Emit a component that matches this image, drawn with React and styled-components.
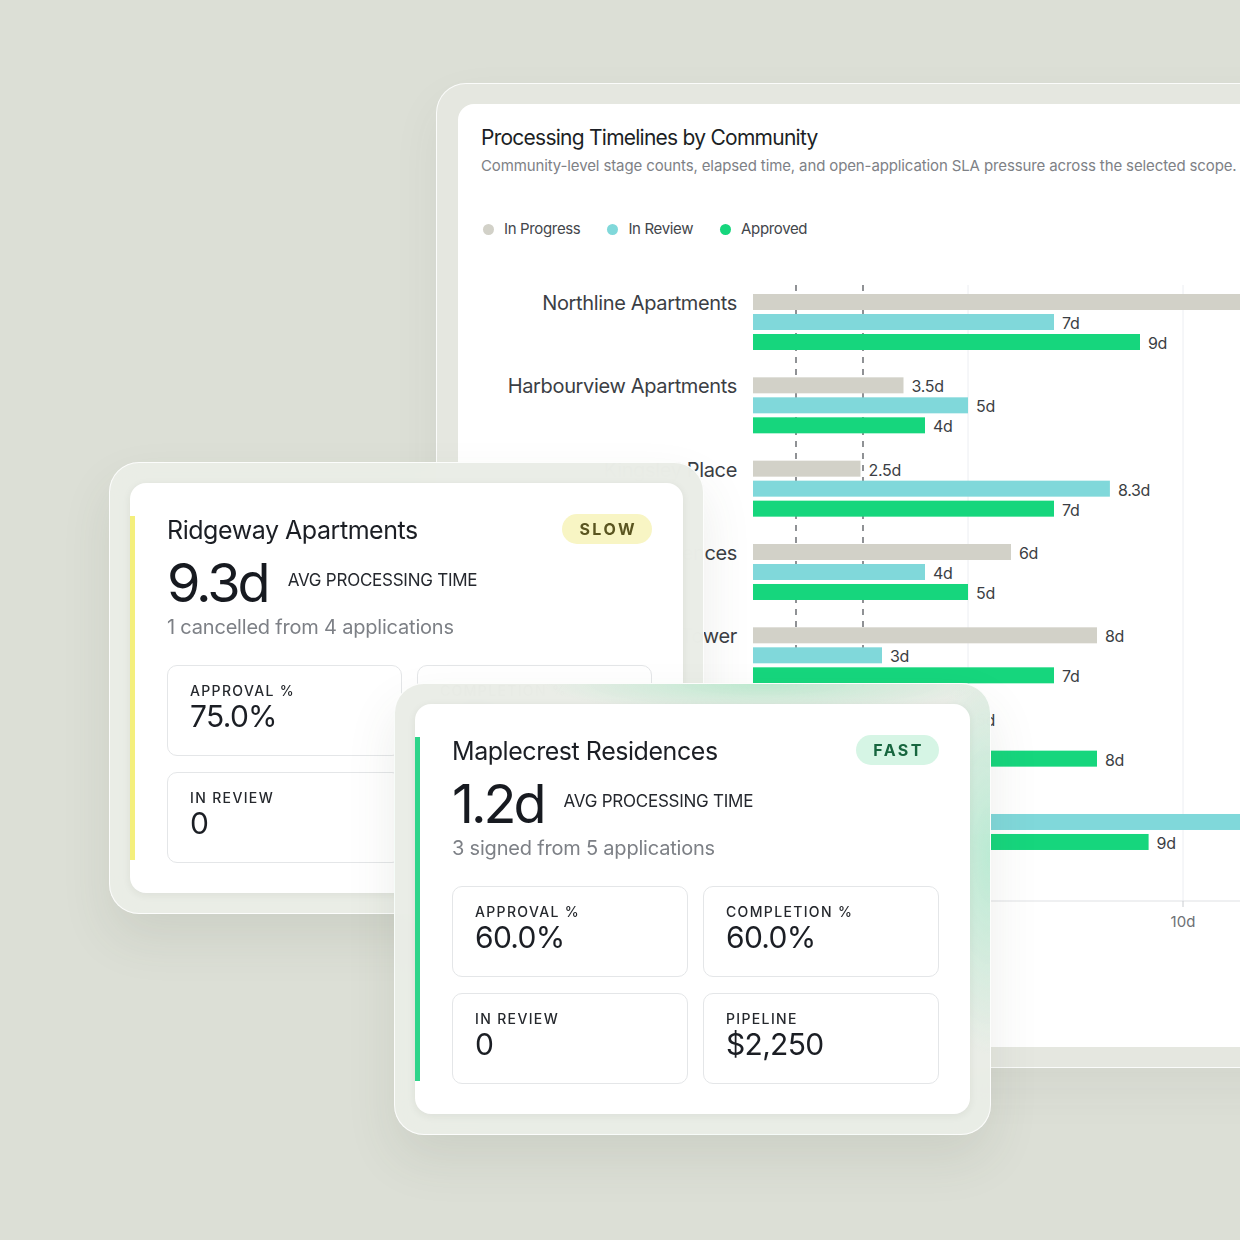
import React from "react";
import styled, { createGlobalStyle } from "styled-components";

const GlobalStyle = createGlobalStyle`
  html, body {
    margin: 0;
    padding: 0;
    background: #dcdfd6;
  }
  body {
    font-family: Inter, "Noto Sans", "Liberation Sans", sans-serif;
    color: #1b1e24;
    -webkit-font-smoothing: antialiased;
  }
`;

const Canvas = styled.div`
  position: relative;
  width: 1240px;
  height: 1240px;
  overflow: hidden;
  background: #dcdfd6;
`;

/* ---------- chart window ---------- */

const Panel = styled.section`
  position: absolute;
  left: 436px;
  top: 83px;
  width: 1000px;
  height: 985px;
  box-sizing: border-box;
  padding: 20px 20px 20px 21px;
  border-radius: 30px;
  background: #e5e7e0;
  border: 1px solid rgba(255, 255, 255, 0.85);
  box-shadow: 0 20px 50px rgba(70, 76, 60, 0.06);
`;

const PanelBody = styled.div`
  height: 100%;
  box-sizing: border-box;
  background: #ffffff;
  border-radius: 16px;
  padding-top: 20px;
  overflow: hidden;
`;

const PanelHeader = styled.header`
  padding-left: 23px;
`;

const PanelTitle = styled.h1`
  margin: 0;
  font-size: 21px;
  line-height: 28px;
  font-weight: 400;
  letter-spacing: -0.75px;
  color: #1c1f25;
`;

const PanelSubtitle = styled.p`
  margin: 4px 0 0;
  font-size: 15px;
  line-height: 20px;
  letter-spacing: -0.12px;
  color: #7e8186;
  white-space: nowrap;
`;

const Legend = styled.ul`
  display: flex;
  gap: 27px;
  margin: 43px 0 0;
  padding: 0 0 0 2px;
  list-style: none;
`;

const LegendItem = styled.li`
  display: flex;
  align-items: center;
  gap: 10px;
  font-size: 15px;
  line-height: 20px;
  letter-spacing: -0.35px;
  color: #43464b;
`;

const Dot = styled.span`
  width: 11px;
  height: 11px;
  border-radius: 50%;
  background: ${(p) => p.$color};
`;

const ChartSvg = styled.svg`
  display: block;
  margin-top: 31px;
  font-family: Inter, "Noto Sans", sans-serif;
`;

/* ---------- community cards ---------- */

const CardFrame = styled.article`
  position: absolute;
  left: ${(p) => p.$x}px;
  top: ${(p) => p.$y}px;
  width: ${(p) => p.$w}px;
  height: 452px;
  box-sizing: border-box;
  padding: 20px;
  border-radius: 30px;
  border: 1px solid rgba(255, 255, 255, 0.85);
  background: ${(p) => p.$glow}, rgba(234, 237, 230, 0.975);
  backdrop-filter: blur(18px);
  -webkit-backdrop-filter: blur(18px);
  box-shadow: 0 24px 50px rgba(70, 76, 60, 0.1);
`;

const CardBody = styled.div`
  position: relative;
  height: 100%;
  box-sizing: border-box;
  background: #ffffff;
  border-radius: 16px;
  padding: 30px 31px 30px 37px;
  box-shadow: 0 2px 8px rgba(40, 45, 35, 0.07);

  &::before {
    content: "";
    position: absolute;
    left: 0;
    top: 33px;
    bottom: 33px;
    width: 5px;
    background: ${(p) => p.$accent};
  }
`;

const CardHead = styled.div`
  display: flex;
  justify-content: space-between;
  align-items: flex-start;
`;

const CardTitle = styled.h2`
  margin: 0;
  font-size: 25px;
  line-height: 34px;
  font-weight: 400;
  letter-spacing: -0.45px;
  color: #1b1e24;
`;

const Pill = styled.span`
  display: inline-flex;
  align-items: center;
  justify-content: center;
  height: 30px;
  padding: 0 15px 0 17px;
  margin-top: 1px;
  border-radius: 15px;
  background: ${(p) => p.$bg};
  color: ${(p) => p.$fg};
  font-size: 16px;
  font-weight: 700;
  letter-spacing: 2.5px;
`;

const MetricRow = styled.div`
  display: flex;
  align-items: center;
  gap: 20px;
  margin-top: 6px;
`;

const BigValue = styled.div`
  font-size: 54px;
  line-height: 60px;
  letter-spacing: -3px;
  color: #171a20;
`;

const MetricLabel = styled.div`
  margin-bottom: 6px;
  font-size: 17px;
  letter-spacing: -0.25px;
  color: #25282e;
`;

const Note = styled.div`
  font-size: 20px;
  line-height: 28px;
  letter-spacing: -0.2px;
  color: #7d8086;
`;

const StatGrid = styled.div`
  display: grid;
  grid-template-columns: 1fr 1fr;
  column-gap: 15px;
  row-gap: 16px;
  margin-top: 24px;
`;

const StatBox = styled.div`
  height: 91px;
  box-sizing: border-box;
  padding: 16px 21px 16px 22px;
  border: 1px solid #e4e6e8;
  border-radius: 10px;
`;

const StatLabel = styled.div`
  font-size: 14px;
  line-height: 17px;
  font-weight: 500;
  letter-spacing: 1.35px;
  color: #25282d;
`;

const StatValue = styled.div`
  font-size: 30px;
  line-height: 34px;
  letter-spacing: -0.7px;
  color: #1b1e24;
`;

/* ---------- data ---------- */

const SERIES = [
  { key: "progress", label: "In Progress", color: "#d2d1c8" },
  { key: "review", label: "In Review", color: "#80d8da" },
  { key: "approved", label: "Approved", color: "#16d67d" },
];

const COMMUNITIES = [
  { name: "Northline Apartments", values: [14, 7, 9] },
  { name: "Harbourview Apartments", values: [3.5, 5, 4] },
  { name: "Kingsley Place", values: [2.5, 8.3, 7] },
  { name: "Cedar Grove Residences", values: [6, 4, 5] },
  { name: "Riverside Tower", values: [8, 3, 7] },
  { name: "Ridgeway Apartments", values: [5, 4, 8] },
  { name: "Maplecrest Residences", values: [1.5, 13, 9.2] },
];

const NO_GLOW = "linear-gradient(transparent, transparent)";
const MINT_GLOW =
  "radial-gradient(70px 200px at 100% 38%, rgba(150, 232, 196, 0.55), transparent), radial-gradient(220px 30px at 62% 0%, rgba(120, 225, 170, 0.4), transparent)";

const CARDS = [
  {
    x: 109,
    y: 462,
    w: 595,
    glow: NO_GLOW,
    name: "Ridgeway Apartments",
    speed: "SLOW",
    pillBg: "#f8f5c4",
    pillFg: "#5a5520",
    accent: "#f4ef7c",
    avg: "9.3d",
    note: "1 cancelled from 4 applications",
    stats: [
      ["APPROVAL %", "75.0%"],
      ["COMPLETION %", "25.0%"],
      ["IN REVIEW", "0"],
      ["PIPELINE", "$1,800"],
    ],
  },
  {
    x: 394,
    y: 683,
    w: 597,
    glow: MINT_GLOW,
    name: "Maplecrest Residences",
    speed: "FAST",
    pillBg: "#d6f5e5",
    pillFg: "#17663f",
    accent: "#2ed48a",
    avg: "1.2d",
    note: "3 signed from 5 applications",
    stats: [
      ["APPROVAL %", "60.0%"],
      ["COMPLETION %", "60.0%"],
      ["IN REVIEW", "0"],
      ["PIPELINE", "$2,250"],
    ],
  },
];

/* ---------- chart geometry ---------- */

const ORIGIN_X = 295;
const PX_PER_DAY = 43;
const MAX_DAYS = 10.5;
const GROUP_TOP = 24;
const GROUP_PITCH = 83.33;
const BAR_H = 16;
const BAR_STEP = 20;
const PLOT_TOP = 15;
const AXIS_Y = 631;

const fmt = (v) => `${Number.isInteger(v) ? v : v > 9 ? Math.round(v) : v}d`;

function TimelineChart() {
  return (
    <ChartSvg width="900" height="680" viewBox="0 0 900 680">
      {[5, 10].map((d) => (
        <line
          key={d}
          x1={ORIGIN_X + d * PX_PER_DAY}
          x2={ORIGIN_X + d * PX_PER_DAY}
          y1={PLOT_TOP}
          y2={AXIS_Y}
          stroke="#eceef2"
          strokeWidth="1"
        />
      ))}
      {[43, 110].map((off) => (
        <line
          key={off}
          x1={ORIGIN_X + off}
          x2={ORIGIN_X + off}
          y1={PLOT_TOP}
          y2={AXIS_Y}
          stroke="#55585d"
          strokeWidth="1.3"
          strokeDasharray="6 6"
        />
      ))}

      {COMMUNITIES.map((c, gi) => {
        const top = GROUP_TOP + gi * GROUP_PITCH;
        return (
          <g key={c.name}>
            <text
              x={ORIGIN_X - 16}
              y={top + BAR_H / 2 + 1}
              textAnchor="end"
              dominantBaseline="central"
              fontSize="20"
              letterSpacing="-0.35"
              fill="#3b3e44"
            >
              {c.name}
            </text>
            {c.values.map((v, si) => {
              const y = top + si * BAR_STEP;
              const w = v * PX_PER_DAY;
              return (
                <g key={si}>
                  <rect x={ORIGIN_X} y={y} width={w} height={BAR_H} fill={SERIES[si].color} />
                  {v <= MAX_DAYS && (
                    <text
                      x={ORIGIN_X + w + 8}
                      y={y + BAR_H / 2 + 1}
                      dominantBaseline="central"
                      fontSize="16"
                      letterSpacing="-0.3"
                      fill="#3b3e44"
                    >
                      {fmt(v)}
                    </text>
                  )}
                </g>
              );
            })}
          </g>
        );
      })}

      <line x1="0" x2="900" y1={AXIS_Y} y2={AXIS_Y} stroke="#dfe1e4" strokeWidth="1" />
      {[0, 5, 10].map((d) => (
        <g key={d}>
          <line
            x1={ORIGIN_X + d * PX_PER_DAY}
            x2={ORIGIN_X + d * PX_PER_DAY}
            y1={AXIS_Y}
            y2={AXIS_Y + 6}
            stroke="#c9ccd0"
            strokeWidth="1"
          />
          <text
            x={ORIGIN_X + d * PX_PER_DAY}
            y={AXIS_Y + 20}
            textAnchor="middle"
            dominantBaseline="central"
            fontSize="15"
            fill="#6d7075"
          >
            {d}d
          </text>
        </g>
      ))}
    </ChartSvg>
  );
}

function CommunityCard({ card }) {
  return (
    <CardFrame $x={card.x} $y={card.y} $w={card.w} $glow={card.glow}>
      <CardBody $accent={card.accent}>
        <CardHead>
          <CardTitle>{card.name}</CardTitle>
          <Pill $bg={card.pillBg} $fg={card.pillFg}>
            {card.speed}
          </Pill>
        </CardHead>
        <MetricRow>
          <BigValue>{card.avg}</BigValue>
          <MetricLabel>AVG PROCESSING TIME</MetricLabel>
        </MetricRow>
        <Note>{card.note}</Note>
        <StatGrid>
          {card.stats.map(([label, value]) => (
            <StatBox key={label}>
              <StatLabel>{label}</StatLabel>
              <StatValue>{value}</StatValue>
            </StatBox>
          ))}
        </StatGrid>
      </CardBody>
    </CardFrame>
  );
}

export default function App() {
  return (
    <>
      <GlobalStyle />
      <Canvas>
        <Panel>
          <PanelBody>
            <PanelHeader>
              <PanelTitle>Processing Timelines by Community</PanelTitle>
              <PanelSubtitle>
                Community-level stage counts, elapsed time, and open-application SLA pressure across the selected
                scope.
              </PanelSubtitle>
              <Legend>
                {SERIES.map((s) => (
                  <LegendItem key={s.key}>
                    <Dot $color={s.color} />
                    {s.label}
                  </LegendItem>
                ))}
              </Legend>
            </PanelHeader>
            <TimelineChart />
          </PanelBody>
        </Panel>
        {CARDS.map((c) => (
          <CommunityCard key={c.name} card={c} />
        ))}
      </Canvas>
    </>
  );
}
